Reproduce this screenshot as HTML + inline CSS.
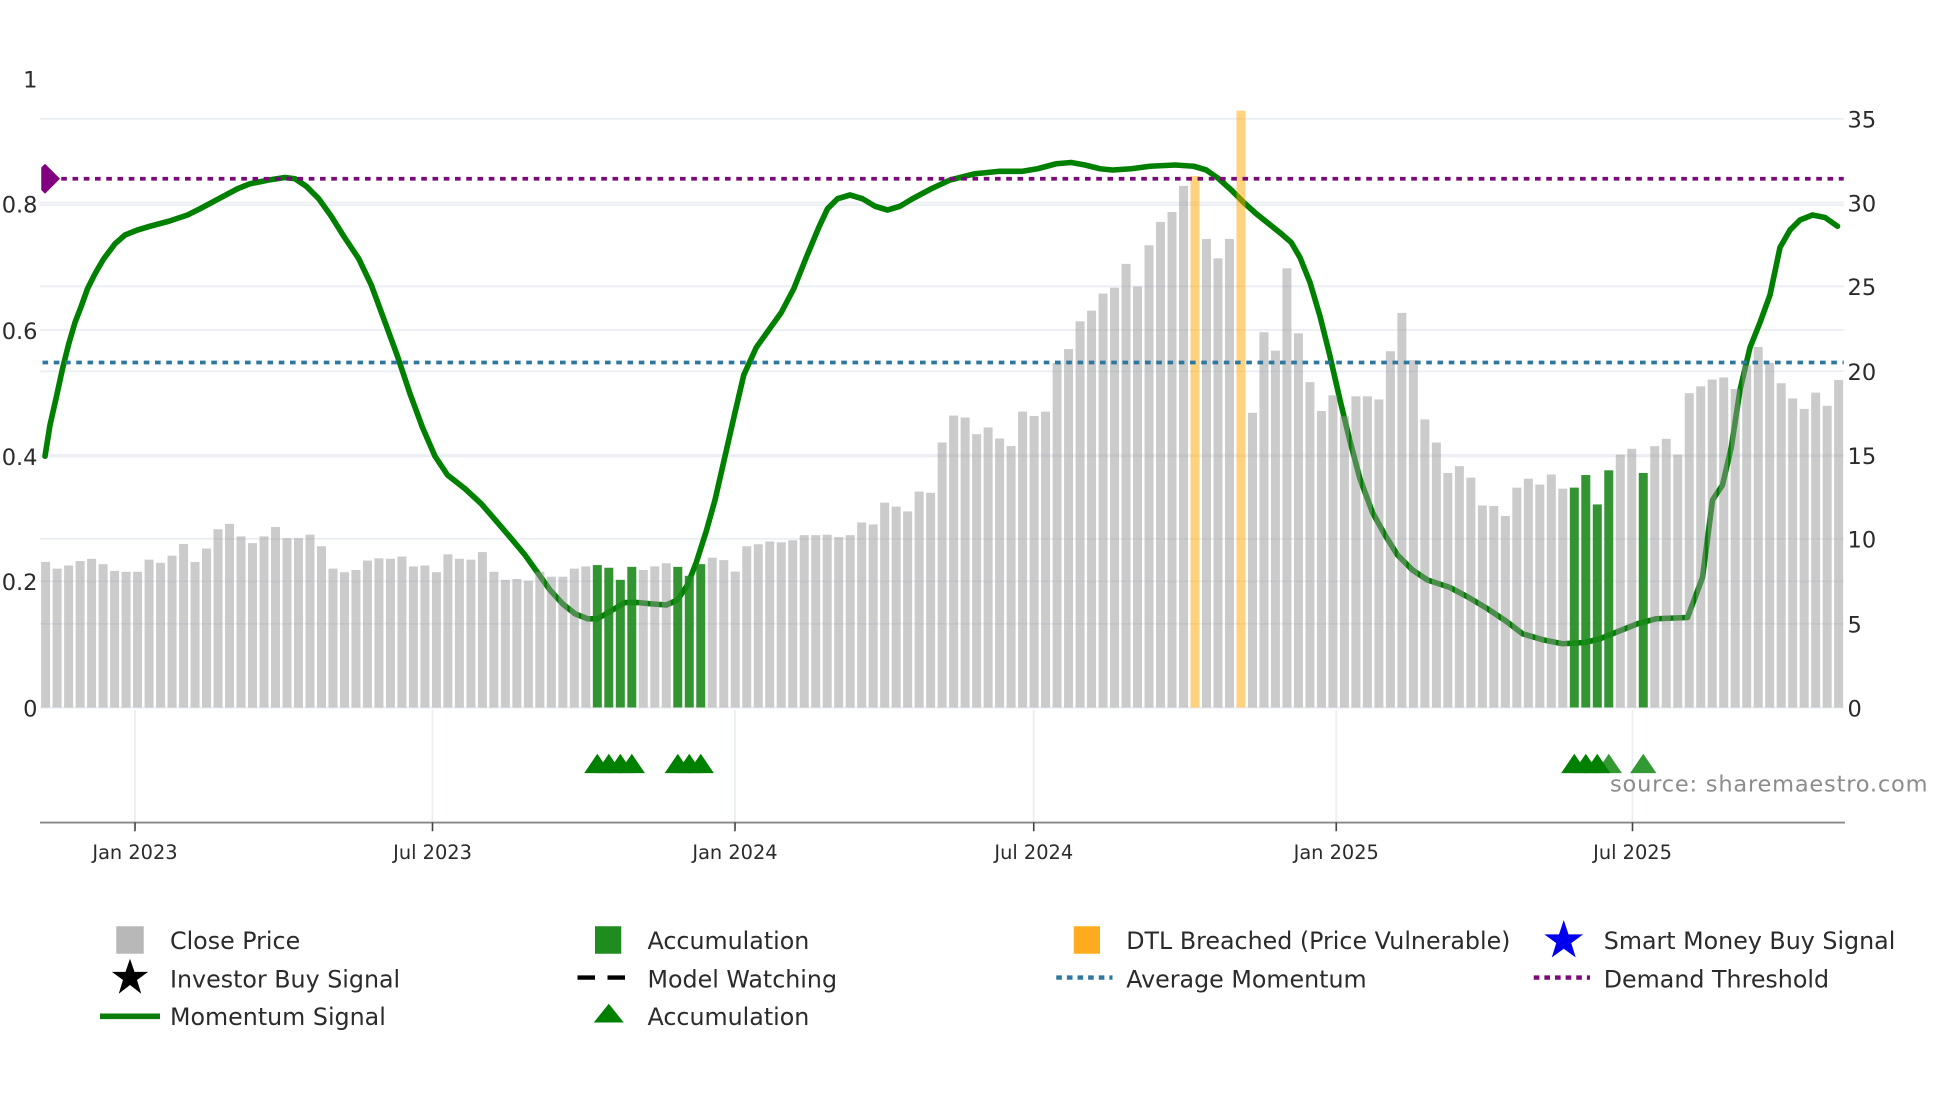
<!DOCTYPE html>
<html><head><meta charset="utf-8"><style>
html,body{margin:0;padding:0;background:#fff;}
svg{display:block;}
text{font-family:"DejaVu Sans","Liberation Sans",sans-serif;fill:#2b2b2b;}
</style></head><body>
<svg id="s" width="1960" height="1102" viewBox="0 0 1568 881.6" preserveAspectRatio="none" xmlns="http://www.w3.org/2000/svg">
<g id="grid" stroke="#ebeef3" stroke-width="1.5">
<line x1="32" x2="1475" y1="95" y2="95"/><line x1="32" x2="1475" y1="162" y2="162"/><line x1="32" x2="1475" y1="164" y2="164"/>
<line x1="32" x2="1475" y1="229" y2="229"/><line x1="32" x2="1475" y1="264" y2="264"/><line x1="32" x2="1475" y1="297" y2="297"/>
<line x1="32" x2="1475" y1="364" y2="364"/><line x1="32" x2="1475" y1="365" y2="365"/><line x1="32" x2="1475" y1="431" y2="431"/>
<line x1="32" x2="1475" y1="465" y2="465"/><line x1="32" x2="1475" y1="499" y2="499"/><line x1="32" x2="1475" y1="566" y2="566"/>
<line x1="108" x2="108" y1="568" y2="658"/><line x1="346" x2="346" y1="568" y2="658"/><line x1="588" x2="588" y1="568" y2="658"/>
<line x1="827" x2="827" y1="568" y2="658"/><line x1="1069" x2="1069" y1="568" y2="658"/><line x1="1306" x2="1306" y1="568" y2="658"/>
</g>
<g id="curve"></g>
<g id="bars"></g>
<line x1="40" x2="1475" y1="143" y2="143" stroke="#7a0a7a" stroke-width="3" stroke-dasharray="4.5 4.5"/>
<line x1="34" x2="1475" y1="290" y2="290" stroke="#2e78a0" stroke-width="3" stroke-dasharray="4.5 4.5"/>
<polygon points="33,134 36,131 48,143 36,155 33,152" fill="#800080"/>
<g id="tri"></g>
<line x1="32" x2="1476" y1="658" y2="658" stroke="#888" stroke-width="1.5"/>
<g stroke="#444" stroke-width="1.3">
<line x1="108" x2="108" y1="658" y2="665"/><line x1="346" x2="346" y1="658" y2="665"/><line x1="588" x2="588" y1="658" y2="665"/>
<line x1="827" x2="827" y1="658" y2="665"/><line x1="1069" x2="1069" y1="658" y2="665"/><line x1="1306" x2="1306" y1="658" y2="665"/>
</g>
<g font-size="18" text-anchor="end">
<text x="30" y="70">1</text><text x="30" y="170">0.8</text><text x="30" y="271">0.6</text>
<text x="30" y="372">0.4</text><text x="30" y="472">0.2</text><text x="30" y="573">0</text>
</g>
<g font-size="18">
<text x="1478" y="102">35</text><text x="1478" y="169">30</text><text x="1478" y="236">25</text>
<text x="1478" y="304">20</text><text x="1478" y="371">15</text><text x="1478" y="438">10</text>
<text x="1478" y="506">5</text><text x="1478" y="573">0</text>
</g>
<g font-size="15.5" text-anchor="middle">
<text x="108" y="687">Jan 2023</text><text x="346" y="687">Jul 2023</text><text x="588" y="687">Jan 2024</text>
<text x="827" y="687">Jul 2024</text><text x="1069" y="687">Jan 2025</text><text x="1306" y="687">Jul 2025</text>
</g>
<text x="1288" y="633" font-size="18" style="fill:#8c8c8c" textLength="254">source: sharemaestro.com</text>
<!-- legend -->
<g font-size="19">
<rect x="93" y="741" width="22" height="22" fill="#b8b8b8"/>
<text x="136" y="759">Close Price</text>
<polygon points="104,767 107.6,777.5 118.5,777.5 109.6,784 113,795 104,788 95,795 98.4,784 89.5,777.5 100.4,777.5" fill="#000"/>
<text x="136" y="790">Investor Buy Signal</text>
<line x1="80" x2="128" y1="813" y2="813" stroke="#0a7d0a" stroke-width="4.5"/>
<text x="136" y="820">Momentum Signal</text>

<rect x="476" y="741" width="21" height="22" fill="#1e8c1e"/>
<text x="518" y="759">Accumulation</text>
<line x1="462" x2="506" y1="782" y2="782" stroke="#000" stroke-width="3.5" stroke-dasharray="14 10"/>
<text x="518" y="790">Model Watching</text>
<polygon points="487,803 499,818 475,818" fill="#008000"/>
<text x="518" y="820">Accumulation</text>

<rect x="859" y="741" width="21" height="22" fill="#ffab1f"/>
<text x="901" y="759">DTL Breached (Price Vulnerable)</text>
<line x1="845" x2="890" y1="782" y2="782" stroke="#2e78a0" stroke-width="3.5" stroke-dasharray="4.5 4"/>
<text x="901" y="790">Average Momentum</text>

<polygon points="1251,736 1254.8,747.5 1266.5,747.5 1257,754.5 1260.6,766 1251,759 1241.4,766 1245,754.5 1235.5,747.5 1247.2,747.5" fill="#0000ee"/>
<text x="1283" y="759">Smart Money Buy Signal</text>
<line x1="1227" x2="1272" y1="782" y2="782" stroke="#7a0a7a" stroke-width="3.5" stroke-dasharray="4.5 4"/>
<text x="1283" y="790">Demand Threshold</text>
</g>
</svg>
<script>
(function(){
var NS="http://www.w3.org/2000/svg";
function el(n,a,p){var e=document.createElementNS(NS,n);for(var k in a)e.setAttribute(k,a[k]);p.appendChild(e);return e;}
var A=[1145,1160,1153,1143,1138,1150,1165,1167,1167,1140,1147,1131,1105,1145,1115,1072,1060,1088,1103,1088,1067,1092,1092,1084,1110,1160,1168,1163,1142,1137,1138,1133,1155,1153,1168,1128,1138,1140,1123,1167,1185,1183,1187,1167,1178,1178,1160,1155,1152,1158,1185,1156,1163,1155,1148,1156,1176,1150];
var B=[1157,1163,1192,1128,1123,1116,1118,1113,1100,1100,1099,1105,1100,1068,1073,1018,1028,1040,990,993,866,798,803,845,828,856,875,788,799,788,665,630,560,533,490,475,415,472,368,309,284,218,193,352,401,352,28,791];
var C=[540,575,418,542,635,690,660,700,662,662,668,576,503,593,706,750,808,795,817,870,871,890,836,819,830,811,838,836,812,868,803,773,762,808,757,743,773,656,643,630,626,648,603,568,598,637,666,686,655,680,631];
var tops=[];
A.forEach(function(z){tops.push(39.4+0.3582*z);});
B.forEach(function(z){tops.push(143+(z-200)*0.3168);});
C.forEach(function(z){tops.push(566-(1255-z)*0.4198);});
var green={48:1,49:1,50:1,51:1,55:1,56:1,57:1,133:1,134:1,135:1,136:1,139:1};
var orange={100:1,104:1};
var bars=document.getElementById('bars');
for(var i=0;i<tops.length;i++){
 var x=36.5+i*9.195, t=tops[i], w=7.2;
 var fill="#989898",op=0.5;
 if(green[i]){fill="#1c8a1c";op=0.9;}
 if(orange[i]){fill="#ffa500";op=0.5;}
 el('rect',{x:(x-w/2).toFixed(2),y:t.toFixed(2),width:w,height:(566-t).toFixed(2),fill:fill,'fill-opacity':op},bars);
}
var P=[[36,365],[40,340],[45,318],[50,295],[55,275],[60,258],[65,245],[70,231],[76,219],[83,207],[92,195],[100,188],[110,184],[120,181],[135,177],[150,172],[160,167],[175,159],[190,151],[200,147],[215,144],[228,142],[236,143],[245,149],[255,159],[265,173],[275,189],[287,207],[297,228],[307,255],[318,285],[328,315],[338,342],[348,365],[358,380],[372,391],[385,403],[398,418],[410,432],[420,444],[430,458],[440,472],[450,483],[460,491],[470,495],[478,495],[490,488],[500,482],[510,482],[520,483],[533,484],[542,480],[550,468],[557,450],[565,425],[572,400],[580,365],[588,330],[595,300],[605,278],[615,264],[625,250],[635,231],[645,206],[655,182],[662,167],[670,159],[680,156],[690,159],[700,165],[710,168],[720,165],[730,159],[745,151],[760,144],[780,139],[800,137],[818,137],[830,135],[845,131],[857,130],[868,132],[880,135],[890,136],[905,135],[920,133],[940,132],[955,133],[965,136],[975,143],[985,152],[995,162],[1005,171],[1015,179],[1025,187],[1033,194],[1040,206],[1048,226],[1056,253],[1064,285],[1072,320],[1080,353],[1088,383],[1098,410],[1108,428],[1118,444],[1130,456],[1142,464],[1160,470],[1175,478],[1190,487],[1205,497],[1218,507],[1235,512],[1250,515],[1268,514],[1280,511],[1295,505],[1310,499],[1325,495],[1350,494],[1356,478],[1362,462],[1370,400],[1378,388],[1385,358],[1392,312],[1400,278],[1408,258],[1416,236],[1424,198],[1432,184],[1440,176],[1450,172],[1460,174],[1470,181]];
el('polyline',{points:P.map(function(p){return p.join(',');}).join(' '),fill:'none',stroke:'#008000','stroke-width':4.5,'stroke-linejoin':'round','stroke-linecap':'round'},document.getElementById('curve'));
var tri=document.getElementById('tri');
[[48,1],[49,1],[50,1],[51,1],[55,1],[56,1],[57,1],[133,1],[134,1],[135,1],[136,0.8],[139,0.8]].forEach(function(a){
 var x=36.5+a[0]*9.195;
 el('polygon',{points:(x-10.5)+',618.5 '+x+',603 '+(x+10.5)+',618.5',fill:'#008000','fill-opacity':a[1]},tri);
});
})();
</script>
</body></html>
